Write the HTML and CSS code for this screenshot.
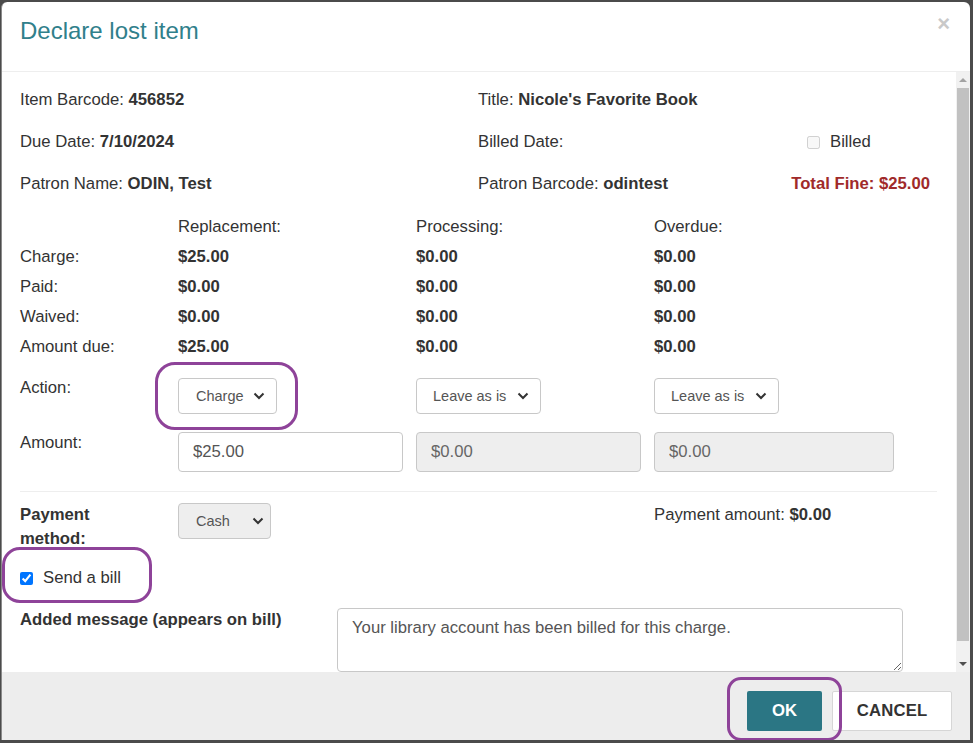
FILE: index.html
```html
<!DOCTYPE html>
<html lang="en">

<head>
    <meta charset="UTF-8">
    <title>Declare lost item</title>

    <link rel="stylesheet" href="styles.css">

</head>

<body>

    <div class="dialog">
        <!-- header -->
        <div class="dlg-head">
            <h4 class="dlg-title">Declare lost item</h4>
            <span class="dlg-close">&times;</span>
        </div>

        <div class="dlg-main">
            <div class="dlg-body">
                <!-- item info -->
                <div class="info-grid">
                    <div>Item Barcode: <b>456852</b></div>
                    <div>Title: <b>Nicole's Favorite Book</b></div>
                    <div>Due Date: <b>7/10/2024</b></div>
                    <div class="billed-cell">
                        <span>Billed Date:</span>
                        <label class="billed"><input type="checkbox" disabled> Billed</label>
                    </div>
                    <div>Patron Name: <b>ODIN, Test</b></div>
                    <div class="fine-cell">
                        <span>Patron Barcode: <b>odintest</b></span>
                        <b class="total-fine">Total Fine: $25.00</b>
                    </div>
                </div>

                <!-- fees -->
                <div class="fees">
                    <div class="fee-row">
                        <span></span><span>Replacement:</span><span>Processing:</span><span>Overdue:</span>
                    </div>
                    <div class="fee-row">
                        <span>Charge:</span><b>$25.00</b><b>$0.00</b><b>$0.00</b>
                    </div>
                    <div class="fee-row">
                        <span>Paid:</span><b>$0.00</b><b>$0.00</b><b>$0.00</b>
                    </div>
                    <div class="fee-row">
                        <span>Waived:</span><b>$0.00</b><b>$0.00</b><b>$0.00</b>
                    </div>
                    <div class="fee-row">
                        <span>Amount due:</span><b>$25.00</b><b>$0.00</b><b>$0.00</b>
                    </div>
                </div>

                <div class="form-row action-row">
                    <span class="row-label">Action:</span>
                    <div>
                        <span class="mark-wrap">
                            <span class="select sel-charge">Charge
                                <svg class="chev" width="12" height="8" viewBox="0 0 12 8"><path d="M1.5 1.5 L6 6 L10.5 1.5" fill="none" stroke="#333" stroke-width="2"/></svg>
                            </span>
                            <span class="ring ring-charge"></span>
                        </span>
                    </div>
                    <div>
                        <span class="select sel-leave">Leave as is
                            <svg class="chev" width="12" height="8" viewBox="0 0 12 8"><path d="M1.5 1.5 L6 6 L10.5 1.5" fill="none" stroke="#333" stroke-width="2"/></svg>
                        </span>
                    </div>
                    <div>
                        <span class="select sel-leave">Leave as is
                            <svg class="chev" width="12" height="8" viewBox="0 0 12 8"><path d="M1.5 1.5 L6 6 L10.5 1.5" fill="none" stroke="#333" stroke-width="2"/></svg>
                        </span>
                    </div>
                </div>

                <div class="form-row amount-row">
                    <span class="row-label">Amount:</span>
                    <div><input class="field" type="text" value="$25.00"></div>
                    <div><input class="field" type="text" value="$0.00" disabled></div>
                    <div><input class="field field-wide" type="text" value="$0.00" disabled></div>
                </div>

                <hr class="sep">

                <div class="form-row pay-row">
                    <b class="pay-label">Payment method:</b>
                    <div>
                        <span class="select sel-cash">Cash
                            <svg class="chev" width="12" height="8" viewBox="0 0 12 8"><path d="M1.5 1.5 L6 6 L10.5 1.5" fill="none" stroke="#333" stroke-width="2"/></svg>
                        </span>
                    </div>
                    <div></div>
                    <div class="pay-amount">Payment amount: <b>$0.00</b></div>
                </div>

                <div class="send-row">
                    <span class="mark-wrap">
                        <label class="send"><input type="checkbox" checked> Send a bill</label>
                        <span class="ring ring-send"></span>
                    </span>
                </div>

                <div class="msg-row">
                    <b class="msg-label">Added message (appears on bill)</b>
                    <textarea class="msg">Your library account has been billed for this charge.</textarea>
                </div>
            </div>

            <!-- scrollbar -->
            <div class="scrollbar">
                <div class="sb-arrow"><span class="tri-up"></span></div>
                <div class="sb-track"><div class="sb-thumb"></div></div>
                <div class="sb-arrow"><span class="tri-down"></span></div>
            </div>
        </div>

        <!-- footer -->
        <div class="dlg-foot">
            <span class="mark-wrap">
                <button class="btn btn-ok">OK</button>
                <span class="ring ring-ok"></span>
            </span>
            <button class="btn btn-cancel">CANCEL</button>
        </div>
    </div>

</body>

</html>
```

FILE: styles.css
```css
html,
body {
    margin: 0;
    padding: 0;
}

body {
    background-color: #4b4b4b;
    font-family: "Liberation Sans", Arial, sans-serif;
    font-size: 16.7px;
    color: #333;
    padding-top: 2px;
    height: 743px;
    box-sizing: border-box;
    overflow: hidden;
}

.dialog {
    width: 968px;
    height: 738px;
    margin-left: 1px;
    background-color: #fff;
    border-radius: 6px 6px 0 0;
    border-left: 1px solid #8a8a8a;
    display: flex;
    flex-direction: column;
    overflow: hidden;
}

/* header */
.dlg-head {
    height: 69px;
    border-bottom: 1px solid #eee;
    display: flex;
    justify-content: space-between;
    align-items: flex-start;
    padding: 0 20px 0 18px;
    flex-shrink: 0;
}

.dlg-title {
    margin: 0;
    padding-top: 15px;
    font-size: 24px;
    font-weight: normal;
    line-height: 28px;
    color: #30808b;
}

.dlg-close {
    padding-top: 9px;
    font-size: 22px;
    font-weight: bold;
    line-height: 26px;
    color: #c9c9c9;
}

/* body */
.dlg-main {
    height: 600px;
    display: flex;
    flex-shrink: 0;
}

.dlg-body {
    flex: 1;
    overflow: hidden;
    padding: 7px 19px 0 18px;
}

.info-grid {
    display: grid;
    grid-template-columns: 458px 1fr;
    grid-auto-rows: 42px;
    align-items: center;
}

.billed-cell {
    display: grid;
    grid-template-columns: 1fr 130px;
    align-items: center;
}

.billed {
    display: flex;
    align-items: center;
    gap: 10px;
}

.billed input,
.send input {
    margin: 0;
    width: 13px;
    height: 13px;
}

.fine-cell {
    display: flex;
    justify-content: space-between;
    padding-right: 7px;
}

.total-fine {
    color: #a02a2a;
}

.fees {
    margin-top: 7px;
}

.fee-row,
.form-row {
    display: grid;
    grid-template-columns: 158px 238px 238px 1fr;
}

.fee-row {
    height: 30px;
    align-items: center;
}

.form-row {
    align-items: start;
}

.action-row {
    margin-top: 16px;
}

.action-row .row-label {
    padding-top: 1px;
    line-height: 18px;
}

.amount-row {
    margin-top: 18px;
}

.amount-row .row-label {
    padding-top: 2px;
    line-height: 18px;
}

/* fake select */
.select {
    height: 36px;
    box-sizing: border-box;
    border: 1px solid #c8c8c8;
    border-radius: 4px;
    background-color: #fff;
    display: inline-flex;
    align-items: center;
    font-size: 14.5px;
    color: #555;
    padding: 0 11px 0 17px;
}

.select .chev {
    margin-left: auto;
}

.sel-charge {
    width: 99px;
}

.sel-leave {
    width: 125px;
    padding-left: 16px;
}

.sel-cash {
    width: 93px;
    background-color: #eee;
    padding-right: 6px;
}

.field {
    width: 225px;
    height: 40px;
    box-sizing: border-box;
    border: 1px solid #c8c8c8;
    border-radius: 4px;
    padding: 0 14px;
    font-family: "Liberation Sans", Arial, sans-serif;
    font-size: 16.7px;
    color: #555;
    background-color: #fff;
    margin: 0;
}

.field:disabled {
    background-color: #eee;
    color: #666;
}

.field-wide {
    width: 240px;
}

.sep {
    margin: 19px 0 0 0;
    border: 0;
    border-top: 1px solid #eee;
}

.pay-row {
    margin-top: 11px;
    line-height: 24px;
}

.pay-label {
    max-width: 110px;
}

.send-row {
    margin-top: 15px;
    line-height: 24px;
}

.send {
    display: flex;
    align-items: center;
    gap: 10px;
}

.msg-row {
    margin-top: 18px;
    display: grid;
    grid-template-columns: 317px 566px;
    align-items: start;
}

.msg-label {
    line-height: 24px;
}

.msg {
    height: 64px;
    box-sizing: border-box;
    border: 1px solid #c8c8c8;
    border-radius: 4px;
    padding: 9px 14px;
    font-family: "Liberation Sans", Arial, sans-serif;
    font-size: 16.7px;
    color: #555;
    margin: 0;
    resize: vertical;
}

/* scrollbar */
.scrollbar {
    width: 14px;
    background-color: #f1f1f1;
    display: flex;
    flex-direction: column;
}

.sb-arrow {
    height: 16px;
    display: flex;
    align-items: center;
    justify-content: center;
}

.tri-up {
    border-left: 4px solid transparent;
    border-right: 4px solid transparent;
    border-bottom: 4px solid #a3a3a3;
}

.tri-down {
    border-left: 4px solid transparent;
    border-right: 4px solid transparent;
    border-top: 4px solid #505050;
}

.sb-track {
    flex: 1;
    padding: 0 1px 15px 1px;
    display: flex;
}

.sb-thumb {
    flex: 1;
    background-color: #c1c1c1;
}

/* footer */
.dlg-foot {
    flex: 1;
    background-color: #ededed;
    display: flex;
    justify-content: flex-end;
    align-items: flex-start;
    gap: 10px;
    padding: 19px 18px 0 0;
}

.btn {
    height: 40px;
    border-radius: 2px;
    font-family: "Liberation Sans", Arial, sans-serif;
    font-size: 16.7px;
    font-weight: bold;
    margin: 0;
    cursor: pointer;
}

.btn-ok {
    width: 75px;
    border: 0;
    background-color: #2b7684;
    color: #fff;
}

.btn-cancel {
    width: 120px;
    border: 1px solid #d6d6d6;
    background-color: #fff;
    color: #333;
    letter-spacing: 0.2px;
}

/* annotation rings */
.mark-wrap {
    position: relative;
    display: inline-block;
    vertical-align: top;
}

.ring {
    position: absolute;
    border: 3px solid #8e4399;
    pointer-events: none;
}

.ring-charge {
    left: -23px;
    right: -21px;
    top: -16px;
    bottom: -16px;
    border-radius: 20px;
}

.ring-send {
    left: -18px;
    right: -31px;
    top: -19px;
    bottom: -13px;
    border-radius: 18px;
}

.ring-ok {
    left: -20px;
    right: -20px;
    top: -14px;
    bottom: -10px;
    border-radius: 14px;
}
```
